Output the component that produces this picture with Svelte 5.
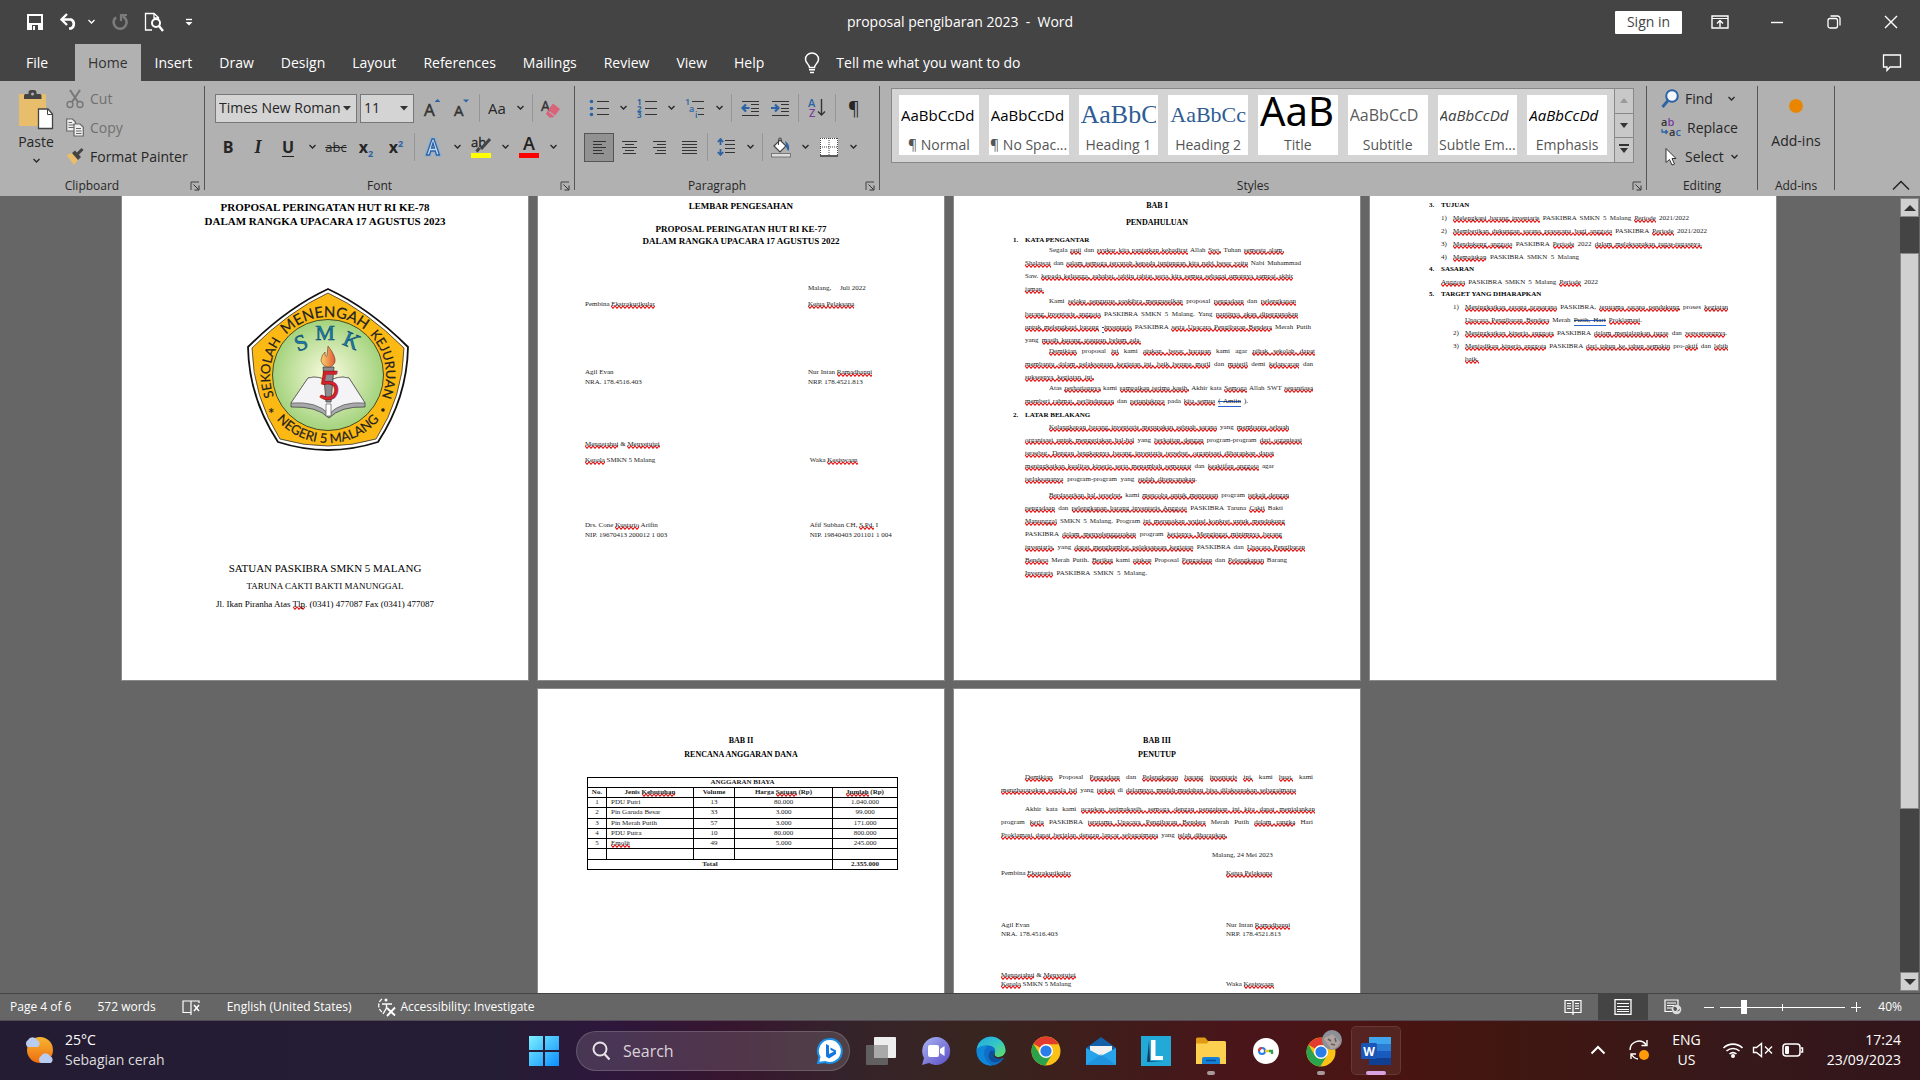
<script>
  const svg = (w, h, body) =>
    `<svg width="${w}" height="${h}" viewBox="0 0 ${w} ${h}" fill="none" aria-hidden="true">${body}</svg>`;

  const lines = (list, color = '#333') =>
    list.map(([x1, x2, y]) => `<path d="M${x1} ${y}.5H${x2}" stroke="${color}"/>`).join('');

  const chromeBody =
    '<circle cx="15" cy="15" r="14.5" fill="#fbc116"/><path d="M15 15 2.4 7.8A14.5 14.5 0 0 1 27.6 8.2H15z" fill="#e33b2e"/><path d="M2.4 7.8A14.5 14.5 0 0 0 14.2 29.5L21 18.5 15 15 8.9 18.5z" fill="#2ba24c"/><circle cx="15" cy="15" r="7" fill="#fff"/><circle cx="15" cy="15" r="5.6" fill="#2a7de9"/>';

  const icons = {
    chev: svg(9, 6, '<path d="M1.5 1 4.5 4 7.5 1" stroke="currentColor" stroke-width="1.3"/>'),
    tri: svg(8, 5, '<path d="M0 0H8L4 4.5z" fill="#333"/>'),
    launch: svg(10, 10, '<path d="M1 9V1H9" stroke="#444"/><path d="M3.5 3.5 8.5 8.5M9 4.5V9H4.5" stroke="#333"/>'),
    save: svg(18, 18, '<path d="M2 2H16V16H2z" stroke="#fff" stroke-width="2"/><path d="M1 10H17V17H1z" fill="#fff"/><path d="M6 12H12V17H6z" fill="#444"/><path d="M7 13H9V17H7z" fill="#fff"/>'),
    undo: svg(20, 18, '<path d="M3 6.5H12A5 5 0 0 1 12 15.5H10" stroke="#fff" stroke-width="2.6"/><path d="M8 1 2.5 6.5 8 12" stroke="#fff" stroke-width="2.4"/>'),
    redo: svg(18, 18, '<path d="M11.5 3.2A6.5 6.5 0 1 1 5 4.2" stroke="#7c7c7c" stroke-width="2.6"/><path d="M10 1V8M9 2H16" stroke="#7c7c7c" stroke-width="2.2"/>'),
    preview: svg(20, 20, '<path d="M8 18H1.5V1.5H10L14.5 5.5V8M10 1.5V6H14.5" stroke="#fff" stroke-width="1.3"/><circle cx="12" cy="11" r="4" stroke="#fff" stroke-width="2"/><path d="M15 14 19 19" stroke="#fff" stroke-width="2.4"/>'),
    custom: svg(8, 8, '<path d="M1 1.5H7" stroke="#fff" stroke-width="1.4"/><path d="M0.5 4H7.5L4 7.6z" fill="#fff"/>'),
    ribbonOpt: svg(18, 14, '<path d="M1 1H17V13H1z" stroke="#fff" stroke-width="1.4"/><path d="M1 3.5H17" stroke="#fff"/><path d="M9 12V5.5M6 8.5 9 5.5 12 8.5" stroke="#fff" stroke-width="1.4"/>'),
    min: svg(14, 14, '<path d="M1 7.5H13" stroke="#fff" stroke-width="1.4"/>'),
    restore: svg(14, 14, '<rect x="1" y="3.5" width="9.5" height="9.5" rx="2" stroke="#fff" stroke-width="1.3"/><path d="M3.5 1H10.5A2.5 2.5 0 0 1 13 3.5V10.5" stroke="#fff" stroke-width="1.3"/>'),
    close: svg(14, 14, '<path d="M1 1 13 13M13 1 1 13" stroke="#fff" stroke-width="1.4"/>'),
    comment: svg(20, 18, '<path d="M1.5 1H18.5V13H8L5 16.5V13H1.5z" stroke="#fff" stroke-width="1.3"/>'),
    bulb: svg(16, 22, '<path d="M5.5 15.5C5.5 12.5 1.5 11 1.5 7.2A6.5 6.2 0 0 1 14.5 7.2C14.5 11 10.5 12.5 10.5 15.5z" stroke="#fff" stroke-width="1.5"/><path d="M5 17.8H11M6 20.5H10" stroke="#fff" stroke-width="1.5"/>'),
    paste: svg(36, 40, '<rect x="1" y="4" width="27" height="32" rx="1" fill="#e8bd6b"/><path d="M6 9V5.5A1.5 1.5 0 0 1 7.5 4H10.5V2.5A2.5 2.5 0 0 1 13 0H16A2.5 2.5 0 0 1 18.5 2.5V4H22A1.5 1.5 0 0 1 23.5 5.5V9z" fill="#444"/><circle cx="14.5" cy="4" r="1.5" fill="#b1b1b1"/><path d="M20.5 19H30L34.5 24V38.5H20.5z" fill="#fff" stroke="#444" stroke-width="1.3"/><path d="M29.5 19V24.5H34.5" stroke="#444"/>'),
    cut: svg(18, 20, '<path d="M4 1 12 13M14 1 6 13" stroke="#777" stroke-width="2"/><circle cx="4" cy="15.5" r="3" stroke="#777" stroke-width="1.4"/><circle cx="14" cy="15.5" r="3" stroke="#777" stroke-width="1.4"/>'),
    copy: svg(18, 19, '<path d="M.7 1H6.5L9.5 4V13H.7z" fill="#eee" stroke="#666" stroke-width="1.2"/><path d="M2.5 4.5H6M2.5 7H8M2.5 9.5H8" stroke="#666"/><path d="M8 6H14L17.3 9V18H8z" fill="#eee" stroke="#666" stroke-width="1.2"/><path d="M10 10.5H15M10 13H15.5M10 15.5H15.5" stroke="#666"/>'),
    painter: svg(18, 18, '<path d="M.5 7 6 5 12 12 8 17z" fill="#e8bd6b"/><path d="M6 5 9 2.5 15 9 12 12z" fill="#444"/><path d="M11 6.5 16.5 1" stroke="#444" stroke-width="3"/>'),
    grow: svg(18, 20, '<text x="2" y="18" font-size="17" fill="#333" stroke="#333" stroke-width=".5" font-family="Open Sans, sans-serif">A</text><path d="M12.5 4 15.5 1 18.5 4z" fill="#2b63a5"/>'),
    shrink: svg(18, 20, '<text x="2" y="18" font-size="15" fill="#333" stroke="#333" stroke-width=".5" font-family="Open Sans, sans-serif">A</text><path d="M11 1.5 14 4.5 17 1.5z" fill="#2b63a5"/>'),
    eraser: svg(20, 20, '<text x="0" y="13" font-size="14" fill="#333" stroke="#333" stroke-width=".4" font-family="Open Sans, sans-serif">A</text><path d="M12 5.5 19 11 14 17.5 7 12z" fill="#d9637a"/><path d="M6.3 12.8 13.3 18.5 11.5 19.5H8.5L5 16z" fill="#d9637a"/>'),
    effectA: svg(20, 22, '<path d="M3.5 19 9 3H11L16.5 19H13.5L12.3 15H7.7L6.5 19z" stroke="#7db2e8" stroke-width="4" stroke-linejoin="round" opacity=".5"/><path d="M3.5 19 9 3H11L16.5 19H13.5L12.3 15H7.7L6.5 19zM10 7 8.5 12H11.5z" fill="#c5daf0" stroke="#2b63a5" stroke-width="1.3"/>'),
    high: svg(22, 22, '<text x="1" y="11" font-size="13" fill="#222" stroke="#222" stroke-width=".3" font-family="Open Sans, sans-serif">ab</text><path d="M20 3 11 13M9.5 12 6.5 15.5" stroke="#444" stroke-width="3"/><path d="M1 17H21V22H1z" fill="#ff0"/>'),
    fontA: svg(20, 22, '<text x="4" y="14" font-size="18" font-weight="600" fill="#222" font-family="Open Sans, sans-serif">A</text><path d="M0 17H20V22H0z" fill="red"/>'),
    bullets: svg(20, 18, lines([[8, 20, 2], [8, 20, 9], [8, 20, 15]]) + '<circle cx="2.5" cy="2.5" r="1.8" fill="#2b63a5"/><circle cx="2.5" cy="9.5" r="1.8" fill="#2b63a5"/><circle cx="2.5" cy="15.5" r="1.8" fill="#2b63a5"/>'),
    numbers: svg(20, 19, lines([[8, 20, 2], [8, 20, 9], [8, 20, 15]]) + '<g font-size="8" font-weight="700" fill="#2b63a5" font-family="Open Sans, sans-serif"><text x="0" y="6">1</text><text x="0" y="12.5">2</text><text x="0" y="19">3</text></g>'),
    multi: svg(20, 19, lines([[7, 19, 2], [12, 19, 9], [13, 19, 15]]) + '<g font-size="9" font-weight="600" fill="#2b63a5" font-family="Open Sans, sans-serif"><text x="0" y="6">1</text><text x="4" y="13">a</text><text x="10" y="19">i</text></g>'),
    outdent: svg(18, 17, lines([[1, 18, 1], [10, 18, 4], [10, 18, 8], [10, 18, 11], [1, 18, 15]]) + '<path d="M8.5 8H2M5 4.5 1.5 8 5 11.5" stroke="#2b63a5" stroke-width="2.2"/>'),
    indent: svg(18, 17, lines([[1, 18, 1], [10, 18, 4], [10, 18, 8], [10, 18, 11], [1, 18, 15]]) + '<path d="M0 8H7M4 4.5 7.5 8 4 11.5" stroke="#2b63a5" stroke-width="2.2"/>'),
    sort: svg(18, 20, '<g font-size="11" font-weight="600" font-family="Open Sans, sans-serif"><text x="0" y="9" fill="#2b63a5">A</text><text x="1" y="19" fill="#7a3f9d">Z</text></g><path d="M13.5 1V17M10 13.5 13.5 17 17 13.5" stroke="#333" stroke-width="1.4"/>'),
    alignL: svg(17, 14, lines([[2, 15, 1], [2, 11, 4], [2, 15, 7], [2, 11, 10], [2, 13, 13]])),
    alignC: svg(17, 14, lines([[1, 16, 1], [4, 13, 4], [1, 16, 7], [4, 13, 10], [2, 15, 13]])),
    alignR: svg(17, 14, lines([[2, 15, 1], [6, 15, 4], [2, 15, 7], [6, 15, 10], [4, 15, 13]])),
    alignJ: svg(17, 14, lines([[1, 16, 1], [1, 16, 4], [1, 16, 7], [1, 16, 10], [1, 16, 13]])),
    spacing: svg(18, 20, lines([[8, 18, 3], [8, 18, 7], [8, 18, 11], [8, 18, 15]]) + '<path d="M3.5 2V8M3.5 12V18M.8 5 3.5 2 6.2 5M.8 15 3.5 18 6.2 15" stroke="#2b63a5" stroke-width="1.8"/>'),
    bucket: svg(22, 21, '<path d="M4 9 10 3 16 9 10 15z" fill="#fff" stroke="#444" stroke-width="1.2"/><path d="M8.5 8V2.5A1.5 1.5 0 0 1 11.5 2.5V5" stroke="#444"/><path d="M15 4C19 6 20 11 18.5 14 17 13 16 10 16 8z" fill="#2b63a5"/><rect x="1.5" y="16.5" width="19" height="3.5" fill="#ddd" stroke="#777"/>'),
    borders: svg(18, 19, '<rect x="0" y="0" width="18" height="19" fill="#fff"/><path d="M.5 0V18M9 0V18M17.5 0V18M0 .5H18M0 9H18" stroke="#444" stroke-dasharray="1 1"/><path d="M0 18H18" stroke="#222" stroke-width="1.5"/>'),
    find: svg(18, 20, '<circle cx="11" cy="7" r="5.8" fill="#f4f8fc" stroke="#2b63a5" stroke-width="2"/><path d="M7 11.5 1.5 18" stroke="#2b63a5" stroke-width="2.8"/>'),
    replace: svg(20, 19, '<g font-size="11" font-weight="600" font-family="Open Sans, sans-serif"><text x="0" y="8" fill="#333">a<tspan fill="#7a3f9d">b</tspan></text><text x="8" y="18" fill="#333">a<tspan fill="#2b63a5">c</tspan></text></g><path d="M1 11V14H6.5M4.5 12 6.5 14 4.5 16" stroke="#2b63a5" stroke-width="1.3"/>'),
    select: svg(18, 20, '<path d="M5 1.5V15.5L8.5 12.5 11 18 13.5 17 11 11.5H15z" fill="#fff" stroke="#333"/>'),
    collapse: svg(18, 11, '<path d="M1 9.5 9 1.5 17 9.5" stroke="#222" stroke-width="1.5"/>'),
    proof: svg(19, 17, '<path d="M9 2H1V13.5H9L9 2 17 2V4M9 2V16" stroke="#fff" stroke-width="1.2"/><path d="M12 6 17 12M17 6 12 12" stroke="#fff" stroke-width="1.5"/>'),
    access: svg(20, 20, '<path d="M5 2A8 8 0 0 0 5 15" stroke="#fff" stroke-width="1.3" stroke-dasharray="4 1.5"/><circle cx="9" cy="3" r="1.5" fill="#fff"/><path d="M5 7H15M9.5 7V11L6 17" stroke="#fff" stroke-width="1.4"/><path d="M10 11 18 18.5M18 10.5 10 19" stroke="#fff" stroke-width="1.9"/>'),
    read: svg(18, 16, '<path d="M1 1.5H8L9 2.5 10 1.5H17V13.5H10L9 14.5 8 13.5H1zM9 2V16" stroke="#fff" stroke-width="1.2"/><path d="M3 4.5H7M3 7H7M3 9.5H7M11 4.5H15M11 7H15M11 9.5H15" stroke="#fff"/>'),
    print: svg(18, 16, '<path d="M1 .7H17V15.3H1z" stroke="#fff" stroke-width="1.3"/><path d="M3 4.5H15M3 7.5H15M3 10.5H15M3 12.5H15" stroke="#fff"/>'),
    web: svg(18, 16, '<path d="M8 12.5H1V1H14V6M3 4H12M3 6.5H10M3 9H8" stroke="#fff" stroke-width="1.2"/><circle cx="12.5" cy="10.5" r="4.8" fill="#ddd"/><path d="M10 8 12.5 9 12 11.5 10 11zM13.5 12 16 10.5" stroke="#555" fill="#555"/>'),
    weather: svg(32, 32, '<defs><linearGradient id="sun" x1="0" y1="0" x2="0" y2="1"><stop stop-color="#f7b733"/><stop offset="1" stop-color="#ee6c0f"/></linearGradient></defs><circle cx="16" cy="16" r="13" fill="url(#sun)"/><path d="M4 13A4 4 0 0 1 4 6 5 5 0 0 1 13 6 4 4 0 0 1 14 13z" fill="#b9cdf3"/><path d="M17 29A4 4 0 0 1 17 22 5 5 0 0 1 26 22 4 4 0 0 1 27 29z" fill="#b9cdf3"/>'),
    start: svg(30, 30, '<defs><linearGradient id="win" x1="0" y1="0" x2="1" y2="1"><stop stop-color="#7df0ff"/><stop offset="1" stop-color="#0a8dff"/></linearGradient></defs><path d="M0 0H14V14H0zM16 0H30V14H16zM0 16H14V30H0zM16 16H30V30H16z" fill="url(#win)"/>'),
    search: svg(20, 20, '<circle cx="9" cy="8" r="6.5" stroke="#e8e2e8" stroke-width="2"/><path d="M13.5 13 18.5 18.5" stroke="#e8e2e8" stroke-width="2.2"/>'),
    bing: svg(26, 26, '<path d="M13 1A12 12 0 1 1 8 24L1 25 2.5 19A12 12 0 0 1 13 1z" fill="#fff" stroke="#1a8fe8" stroke-width="2"/><path d="M9 6 12 7.5V16L17 13.5 13.5 12V9.5L19 12.5V16L12 20.5 9 18.5z" fill="#1476e0"/>'),
    taskview: svg(32, 30, '<rect x="9" y="1" width="22" height="21" rx="1" fill="#eee"/><rect x="1" y="9" width="22" height="20" rx="1" fill="#666" opacity=".9"/><path d="M9 9H23V22H9z" fill="#a9a9a9"/>'),
    chat: svg(30, 30, '<defs><linearGradient id="chat" x1="0" y1="0" x2="1" y2="1"><stop stop-color="#a9b4f4"/><stop offset="1" stop-color="#5a4cc4"/></linearGradient></defs><path d="M15 1A14 14 0 1 1 8 27L1 29 3 22A14 14 0 0 1 15 1z" fill="url(#chat)"/><rect x="7" y="9" width="11" height="12" rx="2" fill="#fff"/><path d="M19 13 23.5 10V20L19 17z" fill="#fff"/>'),
    edge: svg(30, 30, '<defs><linearGradient id="edgeTop" x1="0" y1="0" x2="1" y2="1"><stop stop-color="#22a5e0"/><stop offset=".5" stop-color="#34c6c8"/><stop offset="1" stop-color="#66e05a"/></linearGradient></defs><circle cx="15" cy="15" r="14.5" fill="#0f6fc8"/><path d="M.6 14A14.5 14.5 0 0 1 29.5 14C29.5 19 26 21 22.5 21 18 21 18 18.5 19 17 20.5 13 17 9.5 12 9.5 6 9.5 1.5 12 .6 14z" fill="url(#edgeTop)"/><path d="M12 9.5C5 15 8 25 16 29.5 8 30 .5 24 .6 14 2 11 7 9 12 9.5z" fill="#0f87d8"/><path d="M18 18C16.5 21 21 24 27 22 24 26 20 27 17 26 12 24 11 18 15 14.5 18 14 19 16 18 18z" fill="#0d4f9c"/><path d="M19 17C18 19 19 21 22.5 21 26 21 28.5 19 29.3 16L30 21 27 22C21 24 16.5 21 18 18z" fill="#38241f"/>'),
    chrome: svg(30, 30, chromeBody),
    mail: svg(32, 30, '<path d="M1 12 16 1 31 12V18H1z" fill="#1460a8"/><path d="M5 10H27V20H5z" fill="#f2f2f2"/><path d="M1 12 16 20 31 12V29H1z" fill="#27a3ea"/><path d="M1 29 16 18 31 29z" fill="#1b86d6" opacity=".55"/>'),
    letterL: svg(30, 30, '<path d="M0 0H30V30H0z" fill="#22a9d8"/><path d="M8 4 9 25H22L6 26z" fill="#12375e"/><path d="M10 4H14.5V20H22V24H10z" fill="#fff"/>'),
    folder: svg(32, 30, '<path d="M1 3A1.5 1.5 0 0 1 2.5 1.5H10L13 5H29V10H1z" fill="#e09a13"/><path d="M1 7.5H12L14 5H29.5A1.5 1.5 0 0 1 31 6.5V28H1z" fill="#fdd04f"/><path d="M7 28V23A2 2 0 0 1 9 21H23A2 2 0 0 1 25 23V28z" fill="#1581d8"/><path d="M11 24.5H21" stroke="#0a4f92" stroke-width="1.5"/>'),
    key: svg(28, 28, '<circle cx="14" cy="14" r="13" fill="#fff"/><circle cx="10" cy="14" r="3" stroke="#2a7de9" stroke-width="2"/><path d="M10 11A3 3 0 0 0 7 14" stroke="#e33b2e" stroke-width="2"/><path d="M13 14H17" stroke="#fbc116" stroke-width="2.4"/><path d="M17 14H21M20 14V17" stroke="#2ba24c" stroke-width="2.4"/>'),
    chromeUser: svg(30, 38, `<g transform="translate(0 5)">${chromeBody}</g><circle cx="26" cy="8" r="10" fill="#8b8f98"/><path d="M18 7C21 3 23 6 25 2 29 3 31 7 34 10 32 15 28 17 25 17 23 13 21 12 18 7z" fill="#b3a39d"/><path d="M22 7 25 9M29 6 30 10M25 12 29 13" stroke="#5c626c" stroke-width="1.6"/>`),
    word: svg(32, 30, '<path d="M9 1H31V8H9z" fill="#41a5ee"/><path d="M9 8H31V15H9z" fill="#2b7cd3"/><path d="M9 15H31V22H9z" fill="#185abd"/><path d="M9 22H31V29H9z" fill="#103f91"/><rect x="1" y="7" width="16" height="16" rx="1.5" fill="#1a56b8"/><text x="9" y="19.5" font-size="12" font-weight="700" fill="#fff" text-anchor="middle" font-family="Open Sans, sans-serif">W</text>'),
    up: svg(16, 10, '<path d="M1.5 8.5 8 2 14.5 8.5" stroke="#fff" stroke-width="2"/>'),
    sync: svg(22, 22, '<path d="M2 11A9 9 0 0 1 18 5.5M19 1V6.5H13.5M3 20V15H8M3.5 15.5A9 9 0 0 0 10 20" stroke="#fff" stroke-width="1.4"/><circle cx="16" cy="16" r="5" fill="#ff9a0a"/>'),
    wifi: svg(22, 18, '<path d="M1.5 7A13.5 13.5 0 0 1 20.5 7M4.5 10A9.5 9.5 0 0 1 17.5 10M7.5 13A5.5 5.5 0 0 1 14.5 13" stroke="#fff" stroke-width="1.6"/><circle cx="11" cy="15" r="2" fill="#fff"/>'),
    mute: svg(22, 16, '<path d="M1.5 5.5H4.5L9.5 1.5V14.5L4.5 10.5H1.5z" stroke="#fff" stroke-width="1.4"/><path d="M13 4.5 20 11.5M20 4.5 13 11.5" stroke="#fff" stroke-width="1.4"/>'),
    battery: svg(22, 16, '<rect x="1" y="2" width="17" height="12" rx="3" stroke="#fff" stroke-width="1.5"/><path d="M19 6H20.5V10H19" stroke="#fff" stroke-width="1.5"/><rect x="3" y="4" width="4" height="8" rx="1" fill="#fff"/>')
  };

  const tabs = ['Home', 'Insert', 'Draw', 'Design', 'Layout', 'References', 'Mailings', 'Review', 'View', 'Help'];

  const styles = [
    ['normal', 'AaBbCcDd', '¶ Normal'],
    ['normal', 'AaBbCcDd', '¶ No Spac...'],
    ['h1', 'AaBbC', 'Heading 1'],
    ['h2', 'AaBbCcl', 'Heading 2'],
    ['title', 'AaB', 'Title'],
    ['subtitle', 'AaBbCcD', 'Subtitle'],
    ['subtle', 'AaBbCcDd', 'Subtle Em...'],
    ['emph', 'AaBbCcDd', 'Emphasis']
  ];

  // [word] marks a spelling error, {word} a grammar error.
  const parse = (s) =>
    s.split(/(\[[^\]]*\]|\{[^}]*\})/).filter(Boolean).map((p) =>
      p[0] === '[' ? { k: 'sp', t: p.slice(1, -1) } : p[0] === '{' ? { k: 'gr', t: p.slice(1, -1) } : { k: '', t: p });

  const intro = [
    { c: 'up1', l: [
      ['Segala [puji] dan [syukur kita panjatkan kehadirat] Allah [Swt.] Tuhan [semesta alam.]', 259],
      ['[Shalawat] dan [salam semoga tercurah kepada junjungan kita nabi besar yaitu] Nabi Muhammad', 276],
      ['Saw. [kepada keluarga, sahabat, tabiin tabiat serta kita semua sebagai umatnya sampai akhir]', 268],
      ['[jaman.]', 19]] },
    { c: 'up1', l: [
      ['Kami [selaku pengurus paskibra mengusulkan] proposal [pengadaan] dan [pelengkapan]', 271],
      ['[barang inventaris anggota] PASKIBRA SMKN 5 Malang. Yang [nantinya akan dipergunakan]', 273],
      ['[untuk melengkapi barang] {-}[inventaris] PASKIBRA [serta Upacara Pengibaran Bendera] Merah Putih', 286],
      ['yang [masih kurang ataupun belum ada.]', 116]] },
    { c: 'up2', l: [
      ['[Demikian] proposal [ini] kami [ajukan, besar harapan] kami agar [pihak sekolah dapat]', 290],
      ['[membantu dalam pelaksanaan kegiatan ini, baik berupa moril] dan [materil] demi [kelancaran] dan', 288],
      ['[suksesnya kegiatan ini.]', 69]] },
    { c: 'up2', l: [
      ['Atas [perhatiannya] kami [sampaikan terima kasih.] Akhir kata [Semoga] Allah SWT [senantiasa]', 288],
      ['[memberi rahmat, perlindungan] dan [petunjuknya] pada [kita semua] {( Amiin} ).', 223]] }
  ];
  const background = [
    { c: 'down1', l: [
      ['[Kelangkapan barang inventaris merupakan sebuah sarana] yang [membantu sebuah]', 264],
      ['[organisasi untuk mengerjakan hal-hal] yang [berkaitan dengan] program-program [dari organisasi]', 277],
      ['[tersebut. Dengan lengkapnya barang inventaris tersebut, organisasi diharapkan dapat]', 249],
      ['[meningkatkan kualitas kinerja serta menambah semangat] dan [keaktifan anggota] agar', 249],
      ['[terlaksananya] program-program yang [sudah direncanakan].', 172]] },
    { c: 'down3', l: [
      ['[Berdasarkan hal tersebut,] kami [mencoba untuk menyusun] program [terkait dengan]', 264],
      ['[pengadaan] dan [pelengkapan barang inventaris Anggota] PASKIBRA Taruna [Cakti] Bakti', 258],
      ['[Manunggal] SMKN 5 Malang. Program [ini merupakan wujud konkret untuk mendukung]', 260],
      ['PASKIBRA [dalam menyelenggarakan] program [kerjanya. Mengingat minimnya barang]', 257],
      ['[inventaris,] yang [dapat menghambat pelaksanaan kegiatan] PASKIBRA dan [Upacara Pengibaran]', 280],
      ['[Bendera] Merah Putih. [Berikut] kami [ajukan] Proposal [Pengadaan] dan [Pelengkapan] Barang', 262],
      ['[Inventaris] PASKIBRA SMKN 5 Malang.', 122]] }
  ];
  const goals = [
    [['[Melengkapi barang inventaris] PASKIBRA SMKN 5 Malang [Periode] 2021/2022', 236]],
    [['[Memberikan dukungan sarana prasarana bagi anggota] PASKIBRA [Periode] 2021/2022', 254]],
    [['[Mendukung anggota] PASKIBRA [Periode] 2022 [dalam melaksanakan tugas-tugasnya.]', 249]],
    [['[Memajukan] PASKIBRA SMKN 5 Malang', 126]]
  ];
  const targets = [
    [['[Meningkatkan sarana prasarana] PASKIBRA, [terutama sarana pendukung] proses [kegiatan]', 263],
     ['[Upacara Pengibaran Bendera] Merah {Putih, Hari} [Proklamasi].', 177]],
    [['[Meningkatkan kinerja anggota] PASKIBRA [dalam menjalankan tugas] dan [wewenangnya].', 262]],
    [['[Menjadikan kinerja anggota] PASKIBRA [dari tahun ke tahun semakin] pro-[aktif] dan [lebih]', 263],
     ['[baik.]', 15]]
  ];
  const closing = [
    { c: '', l: [
      ['[Demikian] Proposal [Pengadaan] dan [Pelengkapan] [barang] [inventaris] [ini,] kami [buat,] kami', 312],
      ['[mengharapakan segala hal] yang [terkait] di [dalamnya mudah-mudahan bisa dilaksanakan sebagaimana]', 295]] },
    { c: 'down6', l: [
      ['Akhir kata kami [ucapkan terimakasih, semoga dengan pengajuan ini kita dapat menjalankan]', 314],
      ['program [kerja] PASKIBRA [terutama Upacara Pengibaran Bendera] Merah Putih [dalam rangka] Hari', 312],
      ['[Proklamasi dapat berjalan dengan lancar sebagaimana] yang [telah diharapkan.]', 226]] }
  ];
  const approval = [
    ['g36', '', 'Malang,\u00a0\u00a0\u00a0\u00a0 Juli 2022'],
    ['g6', 'Pembina [Ekstrakurikular]', '[Ketua Pelaksana]'],
    ['g58', 'Agil Evan', 'Nur Intan [Ramadhanni]'],
    ['', 'NRA. 178.4516.403', 'NRP. 178.4521.813'],
    ['g52', '[Mengetahui] & [Menyetujui]', ''],
    ['g6', '[Kepala] SMKN 5 Malang', '\u00a0Waka [Kesiswaan]'],
    ['g55', 'Drs. Cone [Kustarto] Arifin', '\u00a0Afif Subhan CH, [S.Pd.] I'],
    ['', 'NIP. 19670413 200012 1 003', '\u00a0NIP. 19840403 201101 1 004']
  ];
  const signoff = [
    ['g9', 'Pembina [Ekstrakurikular]', '[Ketua Pelaksana]'],
    ['g43', 'Agil Evan', 'Nur Intan [Ramadhanni]'],
    ['', 'NRA. 178.4516.403', 'NRP. 178.4521.813'],
    ['g32', '[Mengetahui] & [Menyetujui]', ''],
    ['', '[Kepala] SMKN 5 Malang', 'Waka [Kesiswaan]']
  ];
  const budget = [
    ['1', 'PDU Putri', '13', '80.000', '1.040.000'],
    ['2', 'Pin Garuda Besar', '33', '3.000', '99.000'],
    ['3', 'Pin Merah Putih', '57', '3.000', '171.000'],
    ['4', 'PDU Putra', '10', '80.000', '800.000'],
    ['5', '[Emolit]', '49', '5.000', '245.000'],
    ['\u00a0', '', '', '', '']
  ];
  const apps = [
    ['Task view', 'taskview', ''], ['Chat', 'chat', ''], ['Edge', 'edge', ''], ['Chrome', 'chrome', ''],
    ['Mail', 'mail', ''], ['L', 'letterL', ''], ['File Explorer', 'folder', 'dot'], ['Passwords', 'key', ''],
    ['Chrome profile', 'chromeUser', 'dot'], ['Word', 'word', 'bar']
  ];
  let zoom = $state(40);
</script>

{#snippet rich(s)}{#each parse(s) as p}{#if p.k}<span class={p.k}>{p.t}</span>{:else}{p.t}{/if}{/each}{/snippet}
{#snippet line(l)}<div class="line" style:width="{l[1]}px">{@render rich(l[0])}</div>{/snippet}
{#snippet tool(name, label)}<button class="tool" aria-label={label}>{@html icons[name]}</button>{/snippet}
{#snippet drop()}<button class="drop" aria-label="More options">{@html icons.chev}</button>{/snippet}
{#snippet foot(label)}<div class="foot"><span>{label}</span><button class="launch" aria-label="{label} settings">{@html icons.launch}</button></div>{/snippet}
{#snippet signRows(rows)}{#each rows as [c, l, r]}<div class="sign {c}"><span>{@render rich(l)}</span><span>{@render rich(r)}</span></div>{/each}{/snippet}

<div class="app">
  <header class="titlebar">
    <div class="quick">
      <button aria-label="Save">{@html icons.save}</button>
      <button aria-label="Undo" class="undo">{@html icons.undo}{@html icons.chev}</button>
      <button aria-label="Repeat">{@html icons.redo}</button>
      <button aria-label="Print preview">{@html icons.preview}</button>
      <button aria-label="Customize toolbar" class="custom">{@html icons.custom}</button>
    </div>
    <h1>proposal pengibaran 2023&nbsp; -&nbsp; Word</h1>
    <div class="window">
      <button class="signin">Sign in</button>
      <button class="wb" aria-label="Ribbon display options">{@html icons.ribbonOpt}</button>
      <button class="wb" aria-label="Minimize">{@html icons.min}</button>
      <button class="wb" aria-label="Restore">{@html icons.restore}</button>
      <button class="wb" aria-label="Close">{@html icons.close}</button>
    </div>
  </header>

  <nav class="tabs">
    <button class="file">File</button>
    {#each tabs as t, i}<button class="tab" class:active={i === 0}>{t}</button>{/each}
    <button class="tell">{@html icons.bulb}<span>Tell me what you want to do</span></button>
    <button class="comments" aria-label="Comments">{@html icons.comment}</button>
  </nav>

  <section class="ribbon">
    <div class="group">
      <div class="body clip">
        <button class="paste">{@html icons.paste}<span>Paste</span>{@html icons.chev}</button>
        <div class="stack">
          <button class="off">{@html icons.cut}Cut</button>
          <button class="off">{@html icons.copy}Copy</button>
          <button>{@html icons.painter}Format Painter</button>
        </div>
      </div>
      {@render foot('Clipboard')}
    </div>

    <div class="group">
      <div class="body rows">
        <div class="trow">
          <label class="box font"><select aria-label="Font"><option>Times New Roman</option></select>{@html icons.tri}</label>
          <label class="box size"><select aria-label="Font size"><option>11</option></select>{@html icons.tri}</label>
          {@render tool('grow', 'Increase font size')}
          {@render tool('shrink', 'Decrease font size')}
          <i class="sep"></i>
          <button class="tool case">Aa</button>{@render drop()}
          <i class="sep"></i>
          {@render tool('eraser', 'Clear formatting')}
        </div>
        <div class="trow">
          <button class="tool"><b>B</b></button>
          <button class="tool ital">I</button>
          <button class="tool under"><b>U</b></button>{@render drop()}
          <button class="tool strike">abc</button>
          <button class="tool"><b>x<sub>2</sub></b></button>
          <button class="tool"><b>x<sup>2</sup></b></button>
          <i class="sep"></i>
          {@render tool('effectA', 'Text effects')}{@render drop()}
          {@render tool('high', 'Highlight')}{@render drop()}
          {@render tool('fontA', 'Font color')}{@render drop()}
        </div>
      </div>
      {@render foot('Font')}
    </div>

    <div class="group">
      <div class="body rows">
        <div class="trow">
          {@render tool('bullets', 'Bullets')}{@render drop()}
          {@render tool('numbers', 'Numbering')}{@render drop()}
          {@render tool('multi', 'Multilevel list')}{@render drop()}
          <i class="sep"></i>
          {@render tool('outdent', 'Decrease indent')}
          {@render tool('indent', 'Increase indent')}
          <i class="sep"></i>
          {@render tool('sort', 'Sort')}
          <i class="sep"></i>
          <button class="tool pilcrow">¶</button>
        </div>
        <div class="trow">
          <button class="tool on" aria-label="Align left">{@html icons.alignL}</button>
          {@render tool('alignC', 'Center')}
          {@render tool('alignR', 'Align right')}
          {@render tool('alignJ', 'Justify')}
          <i class="sep"></i>
          {@render tool('spacing', 'Line spacing')}{@render drop()}
          <i class="sep"></i>
          {@render tool('bucket', 'Shading')}{@render drop()}
          {@render tool('borders', 'Borders')}{@render drop()}
        </div>
      </div>
      {@render foot('Paragraph')}
    </div>

    <div class="group">
      <div class="body gal">
        <div class="gallery">
          <div class="cards">
            {#each styles as [c, sample, name]}
              <button class="card"><span class="sample {c}">{sample}</span><span class="name">{name}</span></button>
            {/each}
          </div>
          <div class="spin">
            <button aria-label="Row up"><i class="t up faint"></i></button>
            <button aria-label="Row down"><i class="t"></i></button>
            <button aria-label="More styles"><i class="t lined"></i></button>
          </div>
        </div>
      </div>
      {@render foot('Styles')}
    </div>

    <div class="group">
      <div class="body">
        <div class="stack edit">
          <button>{@html icons.find}Find<em class="wide">{@html icons.chev}</em></button>
          <button>{@html icons.replace}Replace</button>
          <button>{@html icons.select}Select<em>{@html icons.chev}</em></button>
        </div>
      </div>
      <div class="foot plainfoot"><span>Editing</span></div>
    </div>

    <div class="group">
      <div class="body"><button class="addins"><i></i><span>Add-ins</span></button></div>
      <div class="foot plainfoot"><span>Add-ins</span></div>
    </div>
    <div class="tail"><button aria-label="Collapse ribbon">{@html icons.collapse}</button></div>
  </section>

  <main class="desk">
    <div class="pages">
      <article class="page first cover">
        <h2>PROPOSAL PERINGATAN HUT RI KE-78</h2>
        <h2>DALAM RANGKA UPACARA 17 AGUSTUS 2023</h2>
        <svg class="logo" width="168" height="164" viewBox="-6 0 168 164" role="img" aria-label="School emblem">
          <defs>
            <radialGradient id="disc"><stop offset="0" stop-color="#fbfbe0" /><stop offset="1" stop-color="#a3d37c" /></radialGradient>
            <linearGradient id="flame" x1="0" y1="0" x2="1" y2="0"><stop stop-color="#fbd36a" /><stop offset="1" stop-color="#e05a3a" /></linearGradient>
            <path id="arcTop" d="M23 87A58 58 0 0 1 139 87" />
            <path id="arcLeft" d="M81 145A58 58 0 0 1 81 29" />
            <path id="arcRight" d="M81 29A58 58 0 0 1 81 145" />
            <path id="arcLow" d="M13 87A68 68 0 0 0 149 87" />
          </defs>
          <path d="M81 1Q122 20 161 59Q160 110 131 154Q81 170 31 154Q2 110 1 59Q40 20 81 1z" fill="#fff" stroke="#111" stroke-width="1.8" />
          <path d="M81 5Q120 23 157 60Q156 109 129 151Q81 165 33 151Q6 109 5 60Q42 23 81 5z" fill="#fdb913" stroke="#333" stroke-width=".8" />
          <circle cx="81" cy="87" r="55.5" fill="url(#disc)" stroke="#4a4a20" />
          <g font-family="Lato, sans-serif" fill="#222" font-size="15" stroke="#222" stroke-width=".2">
            <text text-anchor="middle"><textPath href="#arcTop" startOffset="48%">MENENGAH</textPath></text>
            <text text-anchor="middle" font-size="13"><textPath href="#arcLeft" startOffset="54%">SEKOLAH</textPath></text>
            <text text-anchor="middle" font-size="13"><textPath href="#arcRight" startOffset="44%">KEJURUAN</textPath></text>
            <text text-anchor="middle" font-size="13"><textPath href="#arcLow" startOffset="50%">NEGERI 5 MALANG</textPath></text>
            <text x="21" y="131">*</text>
          </g>
          <circle cx="136" cy="122" r="1.8" fill="#222" />
          <path d="M44 115 61 90Q73 87 81 94Q90 87 102 90L118 115V119Q94 118 82 130Q70 118 44 119z" fill="#a7a9ac" stroke="#444" stroke-width=".8" />
          <path d="M44 115 61 90Q73 87 81 94Q90 87 102 90L118 115Q94 113 82 126Q70 113 44 115z" fill="#f4f4f6" stroke="#555" stroke-width=".7" />
          <path d="M76 79H87L84 114H79z" fill="#8b8d90" stroke="#333" stroke-width=".7" />
          <path d="M81 58Q89 68 88 74Q86 79 81 79Q75 78 74 72Q75 66 78 64Q78 70 80 68z" fill="url(#flame)" stroke="#6b3a20" stroke-width=".6" />
          <path d="M79 116H84V128H79z" fill="#fff" stroke="#444" stroke-width=".6" />
          <g font-family="Liberation Serif, serif" font-size="22" fill="#1b7fae" stroke="#0d4d70" stroke-width=".6" text-anchor="middle">
            <text x="54" y="62" transform="rotate(-22 54 55)">S</text>
            <text x="78" y="52">M</text>
            <text x="105" y="60" transform="rotate(24 105 52)">K</text>
          </g>
          <text x="82" y="112" font-family="Lato, sans-serif" font-size="40" fill="#d2232a" stroke="#7a1015" stroke-width=".4" text-anchor="middle">5</text>
        </svg>
        <p class="big">SATUAN PASKIBRA SMKN 5 MALANG</p>
        <p>TARUNA CAKTI BAKTI MANUNGGAL</p>
        <p>Jl. Ikan Piranha Atas {@render rich('[Tlp]')}. (0341) 477087 Fax (0341) 477087</p>
      </article>

      <article class="page first approval">
        <h2>LEMBAR PENGESAHAN</h2>
        <h2 class="g11">PROPOSAL PERINGATAN HUT RI KE-77</h2>
        <h2>DALAM RANGKA UPACARA 17 AGUSTUS 2022</h2>
        <div class="signs">{@render signRows(approval)}</div>
      </article>

      <article class="page first chapter">
        <h3>BAB I</h3>
        <h3 class="g5">PENDAHULUAN</h3>
        <h4 class="g6"><span>1.</span>KATA PENGANTAR</h4>
        {#each intro as p}<div class="para {p.c}">{#each p.l as l}{@render line(l)}{/each}</div>{/each}
        <h4 class="g2"><span>2.</span>LATAR BELAKANG</h4>
        {#each background as p}<div class="para {p.c}">{#each p.l as l}{@render line(l)}{/each}</div>{/each}
      </article>

      <article class="page first outline">
        <h4><span>3.</span>TUJUAN</h4>
        <ol>{#each goals as g, i}<li><span>{i + 1})</span><div>{#each g as l}{@render line(l)}{/each}</div></li>{/each}</ol>
        <h4><span>4.</span>SASARAN</h4>
        <div class="plain">{@render line(['[Anggota] PASKIBRA SMKN 5 Malang [Periode] 2022', 157])}</div>
        <h4><span>5.</span>TARGET YANG DIHARAPKAN</h4>
        <ol class="deep">{#each targets as g, i}<li><span>{i + 1})</span><div>{#each g as l}{@render line(l)}{/each}</div></li>{/each}</ol>
      </article>

      <article class="page second">
        <h3>BAB II</h3>
        <h3>RENCANA ANGGARAN DANA</h3>
        <table>
          <colgroup><col class="c1" /><col class="c2" /><col class="c3" /><col class="c4" /><col /></colgroup>
          <thead>
            <tr><th colspan="5">ANGGARAN BIAYA</th></tr>
            <tr><th>No.</th><th>Jenis {@render rich('[Kebutuhan]')}</th><th>Volume</th><th>Harga {@render rich('[Satuan]')} (Rp)</th><th>{@render rich('[Jumlah]')} (Rp)</th></tr>
          </thead>
          <tbody>
            {#each budget as r}<tr>{#each r as c}<td>{@render rich(c)}</td>{/each}</tr>{/each}
            <tr><th colspan="4">Total</th><th>2.355.000</th></tr>
          </tbody>
        </table>
      </article>

      <article class="page second last">
        <h3>BAB III</h3>
        <h3>PENUTUP</h3>
        <div class="closing">{#each closing as p}<div class="para {p.c}">{#each p.l as l}{@render line(l)}{/each}</div>{/each}</div>
        <p class="date">Malang, 24 Mei 2023</p>
        <div class="signs">{@render signRows(signoff)}</div>
      </article>
    </div>
    <div class="scroll">
      <button aria-label="Scroll up"><i class="t big up"></i></button>
      <div class="track"><div class="thumb"></div></div>
      <button aria-label="Scroll down"><i class="t big"></i></button>
    </div>
  </main>

  <footer class="status">
    <button>Page 4 of 6</button>
    <button>572 words</button>
    <button aria-label="Proofing">{@html icons.proof}</button>
    <button>English (United States)</button>
    <button class="acc">{@html icons.access}Accessibility: Investigate</button>
    <div class="views">
      <button aria-label="Read mode">{@html icons.read}</button>
      <button aria-label="Print layout" class="sel">{@html icons.print}</button>
      <button aria-label="Web layout">{@html icons.web}</button>
    </div>
    <div class="zoom">
      <button aria-label="Zoom out" class="pm"></button>
      <input type="range" min="12" max="172" bind:value={zoom} aria-label="Zoom" />
      <button aria-label="Zoom in" class="pm plus"></button>
      <span>{zoom}%</span>
    </div>
  </footer>

  <div class="taskbar">
    <button class="weather">{@html icons.weather}<span><strong>25°C</strong>Sebagian cerah</span></button>
    <div class="center">
      <button class="startb" aria-label="Start">{@html icons.start}</button>
      <label class="search">{@html icons.search}<input placeholder="Search" aria-label="Search" />{@html icons.bing}</label>
      <div class="apps">
        {#each apps as [label, ic, mark]}<button aria-label={label} class="app-b {mark}">{@html icons[ic]}</button>{/each}
      </div>
    </div>
    <div class="tray">
      <button aria-label="Hidden icons">{@html icons.up}</button>
      <button aria-label="Update" class="upd">{@html icons.sync}</button>
      <button class="lang">ENG<br />US</button>
      <button class="net" aria-label="Network, sound, battery">{@html icons.wifi}{@html icons.mute}{@html icons.battery}</button>
      <button class="clock">17:24<br />23/09/2023</button>
    </div>
  </div>
</div>

<style>
  :global(body) { margin: 0; background: #666; }
  .app { height: 100vh; display: flex; flex-direction: column; overflow: hidden; font: 14px/20px "Open Sans", "Noto Sans", sans-serif; color: #262626; }
  button { appearance: none; border: 0; background: none; padding: 0; margin: 0; font: inherit; color: inherit; display: flex; align-items: center; justify-content: center; }
  button :global(svg), label :global(svg) { flex: none; display: block; overflow: visible; }
  h1, h2, h3, h4, p, ol { margin: 0; padding: 0; }

  .titlebar { flex: none; height: 44px; background: #444; color: #fff; display: grid; grid-template-columns: 1fr auto 1fr; align-items: center; }
  .titlebar h1 { font-size: 14px; font-weight: 400; }
  .quick { display: flex; align-items: center; gap: 15px; padding-left: 26px; height: 40px; }
  .undo { gap: 8px; }
  .custom { padding-left: 6px; }
  .window { display: flex; justify-content: flex-end; align-items: center; height: 44px; padding-right: 1px; }
  .signin { background: #fff; color: #444; width: 67px; height: 23px; border-radius: 1px; }
  .wb { width: 57px; height: 36px; }
  .signin + .wb { margin-left: 9px; }

  .tabs { flex: none; height: 37px; background: #444; color: #fff; display: flex; align-items: stretch; gap: 1px; }
  .file { width: 74px; }
  .tab { padding: 0 13px; }
  .tab.active { background: #b1b1b1; color: #333; }
  .tell { padding-left: 26px; gap: 16px; }
  .comments { margin-left: auto; width: 57px; }

  .ribbon { flex: none; height: 115px; background: #b1b1b1; display: grid; grid-template-columns: 205px 370px 305px 1fr 111px 77px 85px; }
  .group { display: flex; flex-direction: column; border-right: 1px solid #555; margin: 5px 0 6px; min-width: 0; }
  .body { flex: 1; min-height: 0; }
  .foot { flex: none; height: 8px; display: flex; align-items: center; justify-content: center; font-size: 12px; line-height: 16px; position: relative; padding-right: 20px; }
  .foot .launch { position: absolute; right: 3px; bottom: -2px; width: 12px; height: 12px; }
  .plainfoot { padding: 0; }
  .clip { display: flex; }
  .paste { flex-direction: column; justify-content: flex-start; width: 72px; padding-top: 4px; }
  .paste span { line-height: 24px; margin-bottom: 4px; }
  .stack { display: flex; flex-direction: column; margin-top: -2px; margin-left: -6px; }
  .stack button { height: 29px; justify-content: flex-start; gap: 6px; }
  .stack .off { color: #707070; }
  .edit { margin-left: 14px; }
  .edit em { padding-left: 0; }
  .edit .wide { padding-left: 8px; }
  .rows { display: flex; flex-direction: column; gap: 9px; padding: 7px 0 0 9px; }
  .group:nth-child(2) .rows { padding-left: 8px; }
  .trow { display: flex; align-items: center; height: 30px; }
  .tool { width: 30px; height: 29px; flex: none; font-size: 16px; }
  .tool.on { background: #929292; box-shadow: inset 0 0 0 1px #555; }
  .drop { width: 18px; height: 29px; flex: none; }
  .sep { width: 1px; height: 28px; background: #959595; margin: 0 3px; flex: none; }
  .box { height: 29px; box-sizing: border-box; border: 1px solid #777; background: #d4d4d4; display: flex; align-items: center; padding: 0 5px 0 3px; gap: 2px; }
  .font { width: 142px; margin-left: 2px; }
  .size { width: 54px; margin: 0 2px 0 3px; }
  .box select { appearance: none; border: 0; background: none; padding: 0; margin: 0; font: inherit; color: inherit; flex: 1; min-width: 0; width: 0; height: 22px; text-overflow: clip; }
  .case { font-size: 15px; width: 28px; }
  .ital { font-family: "Liberation Serif", serif; font-style: italic; font-weight: 700; font-size: 18px; }
  .under b { border-bottom: 1px solid #222; line-height: 18px; }
  .strike { font-size: 13px; text-decoration: line-through; }
  .pilcrow { font-size: 18px; }
  .tool sub, .tool sup { font-size: 9px; color: #2b63a5; line-height: 0; }
  .gal { padding: 2px 12px 0 11px; }
  .gallery { display: flex; height: 75px; box-sizing: border-box; border: 1px solid #888; background: #d4d4d4; }
  .cards { flex: 1; min-width: 0; display: grid; grid-template-columns: repeat(8, 1fr); gap: 10px; padding: 6px 7px 7px; }
  .card { background: #fff; flex-direction: column; justify-content: flex-end; overflow: hidden; align-items: stretch; min-width: 0; }
  .sample { height: 40px; line-height: 40px; margin: 0 2px; overflow: hidden; white-space: nowrap; color: #000; text-align: left; font-size: 15px; }
  .name { line-height: 20px; color: #555; white-space: nowrap; text-align: center; }
  .sample.h1, .sample.h2 { font-family: "Liberation Serif", serif; color: #2e5c94; font-size: 26px; }
  .sample.h2 { font-size: 22px; }
  .sample.title { font-size: 40px; line-height: 31px; font-family: "Noto Sans", sans-serif; }
  .sample.subtitle { color: #5a5a5a; font-size: 16px; }
  .sample.subtle { color: #404040; font-style: italic; }
  .sample.emph { font-style: italic; }
  .spin { width: 18px; display: grid; grid-template-rows: repeat(3, 1fr); border-left: 1px solid #888; gap: 1px; background: #888; }
  .spin button { background: #c8c8c8; }
  .t { width: 0; border: 4px solid transparent; border-top: 5px solid #333; border-bottom: 0; }
  .t.up { border-top: 0; border-bottom: 5px solid #333; }
  .t.faint { border-bottom-color: #999; }
  .t.big { border-left-width: 6px; border-right-width: 6px; border-top-width: 6px; }
  .t.big.up { border-top-width: 0; border-bottom-width: 6px; }
  .t.lined { position: relative; }
  .t.lined::before { content: ""; position: absolute; left: -5px; top: -9px; width: 10px; height: 2px; background: #333; }
  .addins { flex-direction: column; width: 100%; justify-content: flex-start; padding-top: 13px; gap: 18px; }
  .addins i { width: 14px; height: 14px; border-radius: 7px; background: radial-gradient(#ea8500 55%, #d0953c 100%); }
  .tail { display: flex; justify-content: flex-end; align-items: flex-end; padding: 0 10px 5px 0; }

  .desk { flex: 1; min-height: 0; display: flex; background: #666; overflow: hidden; }
  .pages { flex: 1; display: flex; flex-wrap: wrap; justify-content: center; align-content: flex-start; gap: 9px 10px; padding: 0 124px 0 122px; min-width: 0; }
  .page { width: 406px; box-sizing: border-box; background: #fff; font: 7px/10px "Liberation Serif", serif; color: #1c1c1c; box-shadow: 0 0 0 1px #8a8a8a; white-space: nowrap; }
  .first { height: 484px; }
  .second { height: 525px; padding-top: 45px; }
  .cover { text-align: center; padding-top: 4px; font-size: 9px; color: #000; }
  .cover h2 { font-size: 11px; line-height: 14px; }
  .logo { display: block; margin: 60px auto 107px; }
  .cover p { line-height: 18px; }
  .cover .big { font-size: 11px; }
  .approval { padding-top: 4px; }
  .approval h2 { font-size: 9px; line-height: 12px; text-align: center; color: #000; }
  .signs { padding-left: 47px; }
  .sign { display: grid; grid-template-columns: 223px 1fr; min-height: 10px; }
  .last .sign { grid-template-columns: 225px 1fr; line-height: 9px; min-height: 9px; }
  .g2 { margin-top: 2px; }
  .g5 { margin-top: 5px; }
  .g6 { margin-top: 6px; }
  .g9 { margin-top: 9px; }
  .g11 { margin-top: 11px; }
  .g32 { margin-top: 32px; }
  .g36 { margin-top: 36px; }
  .g43 { margin-top: 43px; }
  .g52 { margin-top: 52px; }
  .g55 { margin-top: 55px; }
  .g58 { margin-top: 58px; }
  h3 { font-size: 8px; line-height: 12px; text-align: center; color: #000; }
  .second h3 { line-height: 14px; }
  h4 { font-size: 7px; line-height: 10px; color: #000; display: flex; }
  h4 span { width: 12px; }
  .chapter { padding: 4px 0 0 59px; }
  .chapter h3 { margin-left: -59px; }
  .para, .plain { padding-left: 12px; }
  .line { line-height: 13px; text-align-last: justify; }
  .para .line:first-child { text-indent: 24px; }
  .up1 { margin-top: -1px; }
  .up2 { margin-top: -2px; }
  .down1 { margin-top: 1px; }
  .down3 { margin-top: 3px; }
  .down6 { margin-top: 6px; }
  .outline { padding: 4px 0 0 59px; }
  ol { list-style: none; padding-left: 12px; margin-top: 2px; }
  ol.deep { padding-left: 24px; }
  li { display: flex; line-height: 13px; }
  li > span { width: 12px; }
  .plain { margin-top: 2px; }
  .closing { padding: 9px 0 0 35px; }
  .date { padding-left: 258px; margin-top: 8px; }
  .sp { padding-bottom: 1px; background: url("data:image/svg+xml,%3Csvg xmlns='http://www.w3.org/2000/svg' width='4' height='4'%3E%3Cpath d='M-1 -.3 2 3.3 5 -.3' fill='none' stroke='%23e31b1b' stroke-width='1.1'/%3E%3C/svg%3E") 0 100% / 4px 4px repeat-x; }
  .gr { padding-bottom: 2px; background: linear-gradient(#2b62d0, #2b62d0) 0 4px / 100% 1px no-repeat, linear-gradient(#2b62d0, #2b62d0) 0 100% / 100% 1px no-repeat; }
  table { border-collapse: collapse; table-layout: fixed; width: 311px; height: 93px; margin: 15px 0 0 49px; text-align: center; }
  .c1 { width: 19px; }
  .c2 { width: 87px; }
  .c3 { width: 41px; }
  .c4 { width: 98px; }
  th, td { border: 1px solid #000; padding: 0; height: 9px; line-height: 9px; }
  td:nth-child(2) { text-align: left; padding-left: 4px; }

  .scroll { flex: none; width: 20px; display: flex; flex-direction: column; padding: 2px 1px 2px 0; box-sizing: border-box; background: #666; }
  .scroll button { height: 19px; background: #d0d0d0; box-shadow: inset 0 0 0 1px #888; }
  .track { flex: 1; background: #444; display: grid; grid-template-rows: 36fr 555fr 163fr; }
  .thumb { grid-row: 2; background: #d0d0d0; box-shadow: inset 0 0 0 1px #888; }

  .status { flex: none; height: 27px; box-sizing: border-box; border-top: 1px solid #444; background: #666; color: #fff; font-size: 12px; display: flex; align-items: stretch; gap: 26px; padding-left: 10px; }
  .acc { gap: 3px; }
  .views { margin-left: auto; display: flex; }
  .views button { width: 50px; }
  .views .sel { background: #444; }
  .zoom { display: flex; align-items: center; gap: 6px; padding: 0 18px 0 0; margin-left: -20px; }
  .zoom span { width: 35px; text-align: right; }
  .pm { width: 10px; height: 10px; background: linear-gradient(#fff, #fff) 0 5px / 10px 1px no-repeat; }
  .pm.plus { background: linear-gradient(#fff, #fff) 0 5px / 10px 1px no-repeat, linear-gradient(#fff, #fff) 5px 0 / 1px 10px no-repeat; }
  .zoom input { appearance: none; width: 125px; height: 14px; margin: 0; background: linear-gradient(#fff, #fff) 0 7px / 100% 1px no-repeat, linear-gradient(#fff, #fff) 50% 4px / 1px 7px no-repeat; }
  .zoom input::-webkit-slider-thumb { appearance: none; width: 6px; height: 14px; background: #fff; }

  .taskbar { flex: none; height: 60px; box-sizing: border-box; border-top: 1px solid #554a55; color: #fff; display: grid; grid-template-columns: 1fr auto 1fr; align-items: center; background: linear-gradient(90deg, #241c33 0, #251c35 26%, #2e173b 32%, #37162f 38%, #35232b 44%, #38251f 51%, #401c1b 58%, #4a151a 65%, #491411 72%, #3f1712 80%, #37181a 90%, #32161b 100%); }
  .weather { justify-self: start; gap: 9px; padding: 0 0 2px 24px; text-align: left; color: #ddd; }
  .weather strong { display: block; font-weight: 400; color: #fff; }
  .weather span { line-height: 20px; }
  .center { display: flex; align-items: center; height: 59px; padding-left: 10px; }
  .startb { width: 30px; margin-right: 17px; }
  .search { width: 274px; height: 40px; box-sizing: border-box; border-radius: 20px; border: 1px solid #ffffff2a; background: #ffffff22; display: flex; align-items: center; gap: 12px; padding: 0 6px 0 14px; }
  .search input { flex: 1; min-width: 0; border: 0; background: none; font: inherit; font-size: 16px; color: #ddd; outline: 0; padding: 0; }
  .search input::placeholder { color: #dcd2da; opacity: 1; }
  .apps { display: flex; margin-left: 6px; gap: 5px; }
  .app-b { width: 50px; height: 49px; position: relative; border-radius: 5px; }
  .bar { background: #ffffff12; box-shadow: inset 0 0 0 1px #ffffff18; }
  .dot::after, .bar::after { content: ""; position: absolute; bottom: 0; left: 21px; width: 8px; height: 4px; border-radius: 2px; background: #a89a9a; }
  .bar::after { left: 15px; width: 20px; background: #d9a3e2; }
  .tray { justify-self: end; display: flex; align-items: center; padding: 0 19px 2px 0; text-align: center; }
  .upd { margin-left: 22px; }
  .lang { margin-left: 22px; }
  .net { gap: 8px; margin-left: 21px; }
  .clock { text-align: right; margin-left: 23px; }
</style>
